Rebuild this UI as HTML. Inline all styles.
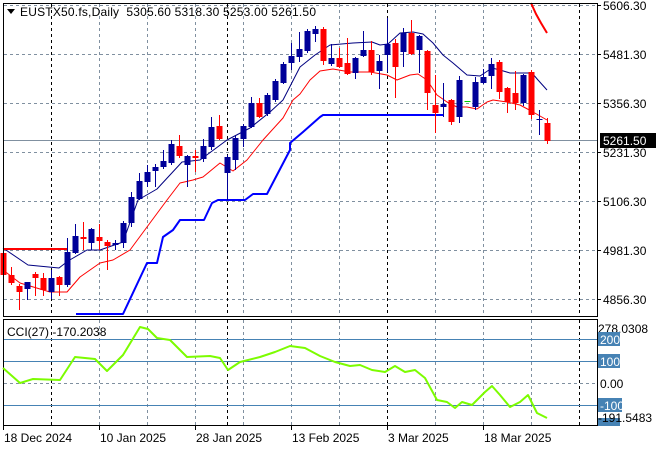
<!DOCTYPE html>
<html><head><meta charset="utf-8"><style>
html,body{margin:0;padding:0;background:#fff;}
svg{display:block;font-family:"Liberation Sans",sans-serif;}
</style></head><body>
<svg id="s" width="660" height="450" xmlns="http://www.w3.org/2000/svg">
<rect width="660" height="450" fill="#fff"/>
</svg>
<script>
var s=document.getElementById('s'),h='';
function L(x1,y1,x2,y2,c,w,d){h+='<line x1="'+x1+'" y1="'+y1+'" x2="'+x2+'" y2="'+y2+'" stroke="'+c+'" stroke-width="'+(w||1)+'"'+(d?' stroke-dasharray="'+d+'"':'')+'/>';}
function P(pts,c,w){h+='<polyline fill="none" stroke="'+c+'" stroke-width="'+w+'" stroke-linejoin="round" points="'+pts.map(function(p){return p.join(',')}).join(' ')+'"/>';}
function T(x,y,t,a){h+='<text x="'+x+'" y="'+y+'" font-size="12" fill="#000"'+(a||'')+'>'+t+'</text>';}
[5,54,103,152,201,250,299].forEach(function(y){L(4,y+.5,597,y+.5,'#8090a0',1,'3,3');});
[99,147,195,243,291,339,435,483,531].forEach(function(x){L(x+.5,4,x+.5,316,'#8090a0',1,'3,3');L(x+.5,320,x+.5,425,'#8090a0',1,'3,3');});
[51,227,387,579].forEach(function(x){L(x+.5,4,x+.5,316,'#000',1,'3,3');L(x+.5,320,x+.5,425,'#000',1,'3,3');});
L(4,140.5,597,140.5,'#8090a0',1);
P([[3,248],[28,265],[59,268],[68,261],[87,250],[100,250],[123,242],[138,200],[157,189],[182,162],[200,160],[227,140],[250,128],[270,112],[283,100],[300,67],[315,55],[330,45],[353,43],[372,42],[380,45],[388,44],[400,33],[413,32],[423,34],[433,43],[443,55],[453,63],[467,75],[480,76],[492,68],[500,70],[510,73],[532,73],[538,80],[547,90]],'#000080',1);
P([[3,270],[20,283],[50,292],[67,292],[80,277],[100,263],[113,260],[130,250],[147,227],[167,200],[180,183],[193,180],[203,177],[220,163],[233,171],[247,160],[263,140],[283,118],[293,100],[300,94],[310,80],[320,71],[333,69],[350,72],[370,72],[387,75],[397,80],[410,75],[418,74],[427,80],[437,95],[447,102],[457,107],[467,107],[477,109],[487,102],[493,100],[507,102],[520,105],[533,112],[547,120]],'#ff0000',1);
P([[3,249],[67,249]],'#ff0000',2);
P([[531,3],[536,14],[541,23],[547,33]],'#ff0000',2);
P([[76,314],[123,314],[147,263],[157,263],[163,237],[173,230],[180,220],[204,220],[212,203],[218,200],[245,200],[253,194],[267,194],[290,150],[290,143],[303,132],[320,117],[323,115],[443,115]],'#0000ff',2);
var C=[[253,275,250,278,'r'],[275,283,267,285,'r'],[286,292,284,310,'r'],[282,289,282,300,'b'],[274,278,272,296,'r'],[278,290,273,296,'r'],[278,292,270,299,'b'],[277,285,276,296,'r'],[252,285,238,287,'b'],[236,253,224,254,'b'],[237,239,222,250,'r'],[229,243,228,250,'b'],[237,241,224,250,'r'],[242,246,240,270,'r'],[243,245,240,250,'b'],[223,243,221,248,'b'],[197,223,192,227,'b'],[181,199,173,200,'b'],[172,182,165,187,'b'],[167,171,164,187,'b'],[161,167,150,169,'b'],[144,163,140,165,'b'],[146,156,135,158,'r'],[156,165,155,187,'b'],[156,158,150,172,'r'],[146,159,139,162,'b'],[127,147,117,150,'b'],[126,139,115,140,'r'],[157,173,155,200,'b'],[138,160,136,170,'b'],[126,139,124,147,'b'],[103,127,97,128,'b'],[103,117,98,118,'r'],[95,114,93,116,'b'],[81,100,79,102,'b'],[64,83,62,84,'b'],[56,63,43,70,'b'],[49,57,32,62,'b'],[31,51,29,53,'b'],[29,34,26,42,'b'],[29,61,27,65,'r'],[58,64,44,66,'b'],[58,67,48,68,'r'],[63,74,38,75,'r'],[58,73,57,79,'b'],[50,56,31,57,'b'],[50,72,41,75,'r'],[61,71,55,89,'b'],[44,55,18,72,'b'],[43,67,39,98,'r'],[33,52,28,67,'b'],[33,54,20,55,'r'],[36,50,35,73,'b'],[51,93,50,110,'r'],[105,113,75,133,'r'],[104,107,83,117,'b'],[100,122,99,125,'r'],[80,117,76,123,'b'],[101,101,101,101,'g'],[82,107,77,110,'b'],[77,83,69,84,'b'],[64,76,58,89,'b'],[62,92,60,99,'r'],[88,102,87,113,'r'],[93,103,71,110,'r'],[75,103,74,106,'b'],[72,115,70,119,'r'],[119,119,110,135,'b'],[123,141,118,144,'r']];
C.forEach(function(c,i){var x=3.5+8*i,col=c[4]=='r'?'#ff0000':c[4]=='b'?'#000099':'#00cc00';
L(x,c[2],x,c[3],col,1);
h+='<rect x="'+(x-3)+'" y="'+c[0]+'" width="6" height="'+Math.max(1,c[1]-c[0])+'" fill="'+col+'"/>';});
h+='<rect x="3.5" y="3.5" width="594" height="313" fill="none" stroke="#000"/>';
h+='<rect x="3.5" y="319.5" width="594" height="106" fill="none" stroke="#000"/>';
[339,361,405].forEach(function(y){L(4,y+.5,597,y+.5,'#4682b4',1);});
L(4,383.5,597,383.5,'#8090a0',1,'3,3');
P([[3,368],[20,383],[33,379],[60,380],[75,357],[95,359],[107,371],[123,355],[140,327],[148,329],[157,338],[170,340],[187,357],[210,356],[220,358],[228,370],[240,362],[260,357],[275,352],[290,346],[305,348],[320,356],[335,362],[350,366],[360,365],[372,370],[385,372],[395,366],[405,372],[415,370],[425,378],[437,400],[447,402],[455,408],[462,402],[472,405],[485,392],[492,386],[500,395],[510,407],[520,402],[528,395],[537,413],[547,418]],'#7cfc00',2);
h+='<path d="M7,9 L15,9 L11,14 Z" fill="#000"/>';
h+='<text x="20" y="16" font-size="12" fill="#000" textLength="296" lengthAdjust="spacing">EUSTX50.fs,Daily&#160;&#160;5305.60 5318.30 5253.00 5261.50</text>';
T(7,336,'CCI(27) -170.2038');
[[5,'5606.30'],[54,'5481.30'],[103,'5356.30'],[152,'5231.30'],[201,'5106.30'],[250,'4981.30'],[299,'4856.30']].forEach(function(a){L(597,a[0]+.5,601,a[0]+.5,'#000',1);T(603,a[0]+5,a[1]);});
h+='<rect x="600" y="133" width="56" height="15" fill="#000"/>';
h+='<text x="603" y="145" font-size="12" fill="#fff">5261.50</text>';
T(598,333,'278.0308');
[[339,'200'],[361,'100'],[405,'-100']].forEach(function(a){h+='<rect x="598" y="'+(a[0]-7)+'" width="'+(a[1].length>3?24:22)+'" height="14" fill="#4682b4"/>';h+='<text x="600" y="'+(a[0]+5)+'" font-size="12" fill="#fff">'+a[1]+'</text>';});
h+='<rect x="598" y="418" width="22" height="8" fill="#4682b4"/>';
T(600,388,'0.00');T(598,422,'-191.5483');
[[3,'18 Dec 2024'],[99,'10 Jan 2025'],[195,'28 Jan 2025'],[291,'13 Feb 2025'],[387,'3 Mar 2025'],[483,'18 Mar 2025']].forEach(function(a){L(a[0]+.5,426,a[0]+.5,430,'#000',1);T(a[0]+1,442,a[1]);});
s.innerHTML+=h;
</script>
</body></html>
